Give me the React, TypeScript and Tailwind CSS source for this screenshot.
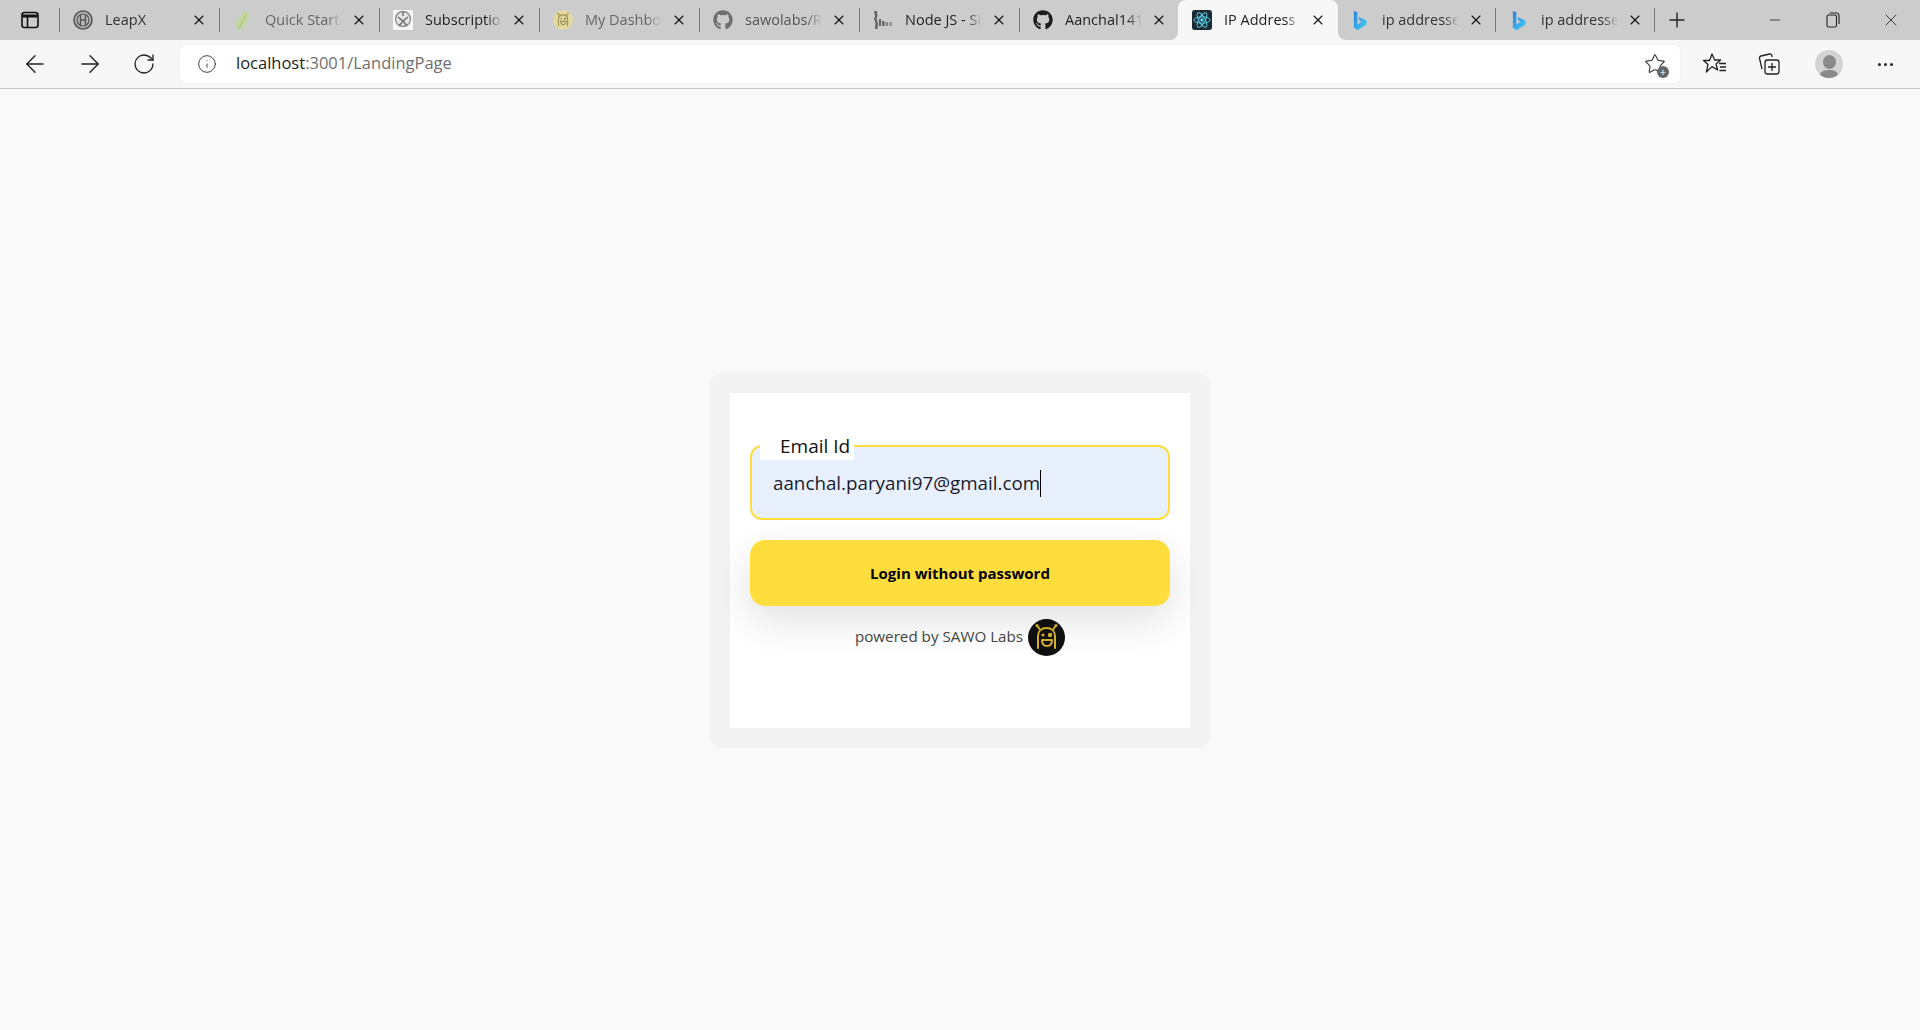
import React from 'react';
import { ArrowLeft, ArrowRight, RotateCw, Info, X, Plus, Minus, Star } from 'lucide-react';
import { FaGithub } from 'react-icons/fa';

const font = { fontFamily: '"Open Sans", "Noto Sans", sans-serif' };

const BoschIcon = () => (
  <svg width="20" height="20" viewBox="0 0 20 20" fill="none" stroke="#555">
    <circle cx="10" cy="10" r="9" strokeWidth="1.6" fill="#b8b8b8" />
    <circle cx="10" cy="10" r="6" strokeWidth="1.2" />
    <path d="M7.500 5v10M12.500 5v10M7.500 10h5" strokeWidth="1.4" />
  </svg>
);

const LeafIcon = () => (
  <svg width="16" height="21" viewBox="0 0 16 21">
    <path d="M13 0.500C7 3 1 9 1 15c0 3 1.500 5 3.500 5.500C10 18 16 9 13 0.500z" fill="#c3d6a0" />
    <path d="M11 4L4 19" stroke="#a9bd82" strokeWidth="1" />
  </svg>
);

const GlobeIcon = () => (
  <svg width="20" height="20" viewBox="0 0 20 20">
    <rect width="20" height="20" fill="#f7f7f7" />
    <circle cx="10" cy="9" r="7.500" fill="#e4e4e4" stroke="#8a8a8a" strokeWidth="1.3" />
    <path d="M5 7l5 4 5-4M6 16l4-5 4 5M10 2v4" stroke="#6f6f6f" strokeWidth="1.4" fill="none" />
  </svg>
);

const SawoIcon = ({ bg, fg, size }: { bg: string; fg: string; size: number }) => (
  <svg width={size} height={size} viewBox="0 0 37 37" fill="none">
    <circle cx="18.500" cy="18.500" r="18.500" fill={bg} />
    <g stroke={fg} strokeWidth="2" strokeLinecap="round" strokeLinejoin="round">
      <path d="M10 29V17c0-5 3.500-8 8.500-8s8.500 3 8.500 8v12" />
      <path d="M11.500 10L9.500 7M25.500 10l2-3" />
      <path d="M14 21h10c0 4-2 6-5 6s-5-2-5-6z" />
    </g>
    <circle cx="9" cy="6.500" r="1.500" fill={fg} />
    <circle cx="28" cy="6.500" r="1.500" fill={fg} />
    <circle cx="15" cy="16" r="1.600" fill={fg} />
    <circle cx="22" cy="16" r="2.200" fill={fg} />
  </svg>
);

const NodeBarsIcon = () => (
  <svg width="20" height="20" viewBox="0 0 20 20" fill="#666">
    <path d="M1 1h3l.5 5-1 3 1.500 4-.5 6H2l.5-6L1 9l1-3z" />
    <rect x="6" y="9" width="2" height="7" />
    <rect x="9" y="11" width="2.500" height="5" />
    <rect x="12.500" y="12" width="2.500" height="4" fill="#888" />
    <rect x="16" y="12" width="3" height="4" fill="#999" />
  </svg>
);

const ReactIcon = () => (
  <svg width="20" height="20" viewBox="0 0 22 22" fill="none">
    <rect width="22" height="22" rx="3" fill="#1c2b33" />
    <g stroke="#5fd3ee" strokeWidth="1">
      <ellipse cx="11" cy="11" rx="9" ry="3.500" />
      <ellipse cx="11" cy="11" rx="9" ry="3.500" transform="rotate(60 11 11)" />
      <ellipse cx="11" cy="11" rx="9" ry="3.500" transform="rotate(120 11 11)" />
    </g>
    <circle cx="11" cy="11" r="2" fill="#5fd3ee" />
  </svg>
);

const BingIcon = ({ id }: { id: string }) => (
  <svg width="14" height="21" viewBox="0 0 16 24">
    <defs>
      <linearGradient id={id} x1="0" y1="0" x2="1" y2="1">
        <stop offset="0" stopColor="#2f7fe0" />
        <stop offset="1" stopColor="#3fd0f0" />
      </linearGradient>
    </defs>
    <path d="M1 1l4 1.500v14l5-3-2.500-1.200L6 8l9.500 4v4.500L5 23l-4-3z" fill={`url(#${id})`} />
  </svg>
);

const tabs = [
  { title: 'LeapX', icon: <BoschIcon />, text: 'text-[#333]', cell: 'w-[160px] pl-3' },
  { title: 'Quick Start Guide', icon: <LeafIcon />, text: 'text-[#666]', cell: 'w-[160px] pl-3' },
  { title: 'Subscriptions', icon: <GlobeIcon />, text: 'text-[#222]', cell: 'w-[160px] pl-3' },
  { title: 'My Dashboard', icon: <SawoIcon bg="#e3d9a0" fg="#9c8f55" size={20} />, text: 'text-[#666]', cell: 'w-[160px] pl-3' },
  { title: 'sawolabs/React', icon: <FaGithub size={20} className="text-[#6e6e6e]" />, text: 'text-[#555]', cell: 'w-[160px] pl-3' },
  { title: 'Node JS - Simple', icon: <NodeBarsIcon />, text: 'text-[#222]', cell: 'w-[160px] pl-3' },
  { title: 'Aanchal1411', icon: <FaGithub size={20} className="text-[#1b1b1b]" />, text: 'text-[#222]', cell: 'w-[159px] pl-3 rounded-br-lg' },
  { title: 'IP Address', icon: <ReactIcon />, text: 'text-[#222]', cell: 'w-[160px] pl-3', active: true },
  { title: 'ip addresses', icon: <BingIcon id="bing-a" />, text: 'text-[#333]', cell: 'w-[157px] pl-[10px] rounded-bl-lg' },
  { title: 'ip addresses', icon: <BingIcon id="bing-b" />, text: 'text-[#333]', cell: 'w-[159px] pl-3' },
];

const App: React.FC = () => {
  return (
    <div className="min-h-[1030px] flex flex-col bg-[#f9f9f9]" style={font}>
      {/* Tab strip */}
      <div className="h-10 flex items-stretch bg-[linear-gradient(#cccccc_50%,#f7f7f7_50%)]">
        <div className="w-[59px] flex items-center justify-center bg-[#cccccc]">
          <svg width="20" height="20" viewBox="0 0 20 20" fill="none" stroke="#111" strokeWidth="1.6">
            <rect x="2" y="2.500" width="16" height="15" rx="2.500" />
            <path d="M2.500 6h15" strokeWidth="3" />
            <path d="M7.500 6v11" />
          </svg>
        </div>
        {tabs.map((tab, i) => (
          <div
            key={i}
            className={
              tab.active
                ? `${tab.cell} flex items-center bg-[#f7f7f7] rounded-t-lg`
                : `${tab.cell} flex items-center relative bg-[#cccccc]`
            }
          >
            {!tab.active && !tabs[i - 1]?.active && (
              <span className="absolute left-0 top-[8px] h-6 w-px bg-[#777]" />
            )}
            <span className="w-6 h-6 flex items-center justify-center shrink-0">{tab.icon}</span>
            <span
              className={`ml-[10px] mb-px w-[77px] overflow-hidden whitespace-nowrap text-[14.500px] [mask-image:linear-gradient(to_right,black_80%,transparent)] ${tab.text}`}
            >
              {tab.title}
            </span>
            <X size={16} strokeWidth={1.6} className="ml-[9px] text-[#111]" />
          </div>
        ))}
        <div className="flex-1 flex items-center relative pl-[11px] bg-[#cccccc]">
          <span className="absolute left-0 top-[8px] h-6 w-px bg-[#777]" />
          <Plus size={24} strokeWidth={1.4} className="text-[#222]" />
          <div className="ml-auto flex items-center">
            <div className="w-[58px] flex justify-center">
              <Minus size={16} strokeWidth={1.2} className="text-[#222]" />
            </div>
            <div className="w-[58px] flex justify-center">
              <svg width="14" height="16" viewBox="0 0 14 16" fill="none" stroke="#222" strokeWidth="1.1">
                <rect x="1" y="3" width="9.500" height="12" rx="1.500" />
                <path d="M3.500 1h7a2.500 2.500 0 0 1 2.500 2.500V12" />
              </svg>
            </div>
            <div className="w-[58px] flex justify-center">
              <X size={20} strokeWidth={1} className="text-[#222]" />
            </div>
          </div>
        </div>
      </div>

      {/* Toolbar */}
      <div className="h-[49px] flex items-center bg-[#f7f7f7] border-b border-[#c8c8c8]">
        <div className="w-[180px] flex items-center pl-[21px] gap-[27px] text-[#222]">
          <ArrowLeft size={28} strokeWidth={1.2} />
          <ArrowRight size={28} strokeWidth={1.2} />
          <RotateCw size={24} strokeWidth={1.3} className="ml-px" />
        </div>
        <div className="w-[1500px] h-[38px] -mt-px flex items-center bg-white rounded-md shadow-[0_0_2px_rgba(0,0,0,0.08)] pl-[17px] pr-[14px]">
          <Info size={20} strokeWidth={1.2} className="text-[#444]" />
          <span className="ml-[19px] text-[16.500px] text-[#222]">
            localhost<span className="text-[#6f6f6f]">:3001/LandingPage</span>
          </span>
          <span className="ml-auto relative">
            <Star size={22} strokeWidth={1.2} className="text-[#333]" />
            <span className="absolute -right-[3px] -bottom-[3px] w-3 h-3 rounded-full bg-[#666] text-white text-[11px] leading-[11px] text-center">
              +
            </span>
          </span>
        </div>
        <div className="flex-1 flex items-center pl-[22px] text-[#222]">
          <svg width="26" height="24" viewBox="0 0 26 24" fill="none" stroke="#222" strokeWidth="1.3" strokeLinejoin="round">
            <path d="M10 2l2.600 6h6l-4.600 4 1.600 6-5.600-3.400L4.400 20 6 12.500 1.500 8.500H7.500z" />
            <path d="M17 11.500h7M18 15h6M17.500 18.500h6.500" />
          </svg>
          <svg className="ml-[29px]" width="24" height="24" viewBox="0 0 24 24" fill="none" stroke="#222" strokeWidth="1.3">
            <rect x="8" y="8" width="14" height="14" rx="2.500" />
            <path d="M15 5V4a2 2 0 0 0-2.400-2L4 4a2 2 0 0 0-1.500 2.400L5 17" />
            <path d="M15 11v8M11 15h8" />
          </svg>
          <span className="ml-[34px] w-7 h-7 rounded-full bg-[#d4d4d4] flex flex-col items-center justify-end overflow-hidden">
            <span className="w-[13px] h-[14px] rounded-full bg-[#8a8a8a] mb-px" />
            <span className="w-5 h-2 rounded-t-full bg-[#8a8a8a]" />
          </span>
          <span className="ml-[35px] flex gap-[3px]">
            <span className="w-[3px] h-[3px] rounded-full bg-[#222]" />
            <span className="w-[3px] h-[3px] rounded-full bg-[#222]" />
            <span className="w-[3px] h-[3px] rounded-full bg-[#222]" />
          </span>
        </div>
      </div>

      {/* Page */}
      <main className="flex-1 flex items-center justify-center pt-[2px]">
        <div className="w-[500px] p-5 bg-[#f3f3f3] rounded-xl">
          <div className="h-[335px] bg-white px-5 pt-[52px]">
            <div className="relative h-[75px] rounded-xl border-2 border-[#ffdd3c] bg-[#e8f0fe] flex items-center pl-[21px]">
              <span className="absolute left-2 -top-[11px] h-6 w-[94px] bg-white pl-[20px] text-[19px] leading-[20px] whitespace-nowrap text-[#111]">
                Email Id
              </span>
              <span className="text-[18.800px] mt-[1px] whitespace-nowrap text-[#1a1a2e]">aanchal.paryani97@gmail.com</span>
              <span className="w-px h-[27px] bg-black mt-[2px]" />
            </div>
            <button className="mt-5 w-full h-[66px] rounded-[15px] bg-[#ffdd3c] text-[15px] font-bold text-black shadow-[0_15px_40px_rgba(0,0,0,0.12)]">
              Login without password
            </button>
            <div className="mt-[13px] flex items-center justify-center gap-[5px] text-[15.200px] text-[#444]">
              <span className="-mt-[2px]">powered by SAWO Labs</span>
              <SawoIcon bg="#0f0f0f" fg="#d4af2c" size={37} />
            </div>
          </div>
        </div>
      </main>
    </div>
  );
};

export default App;
